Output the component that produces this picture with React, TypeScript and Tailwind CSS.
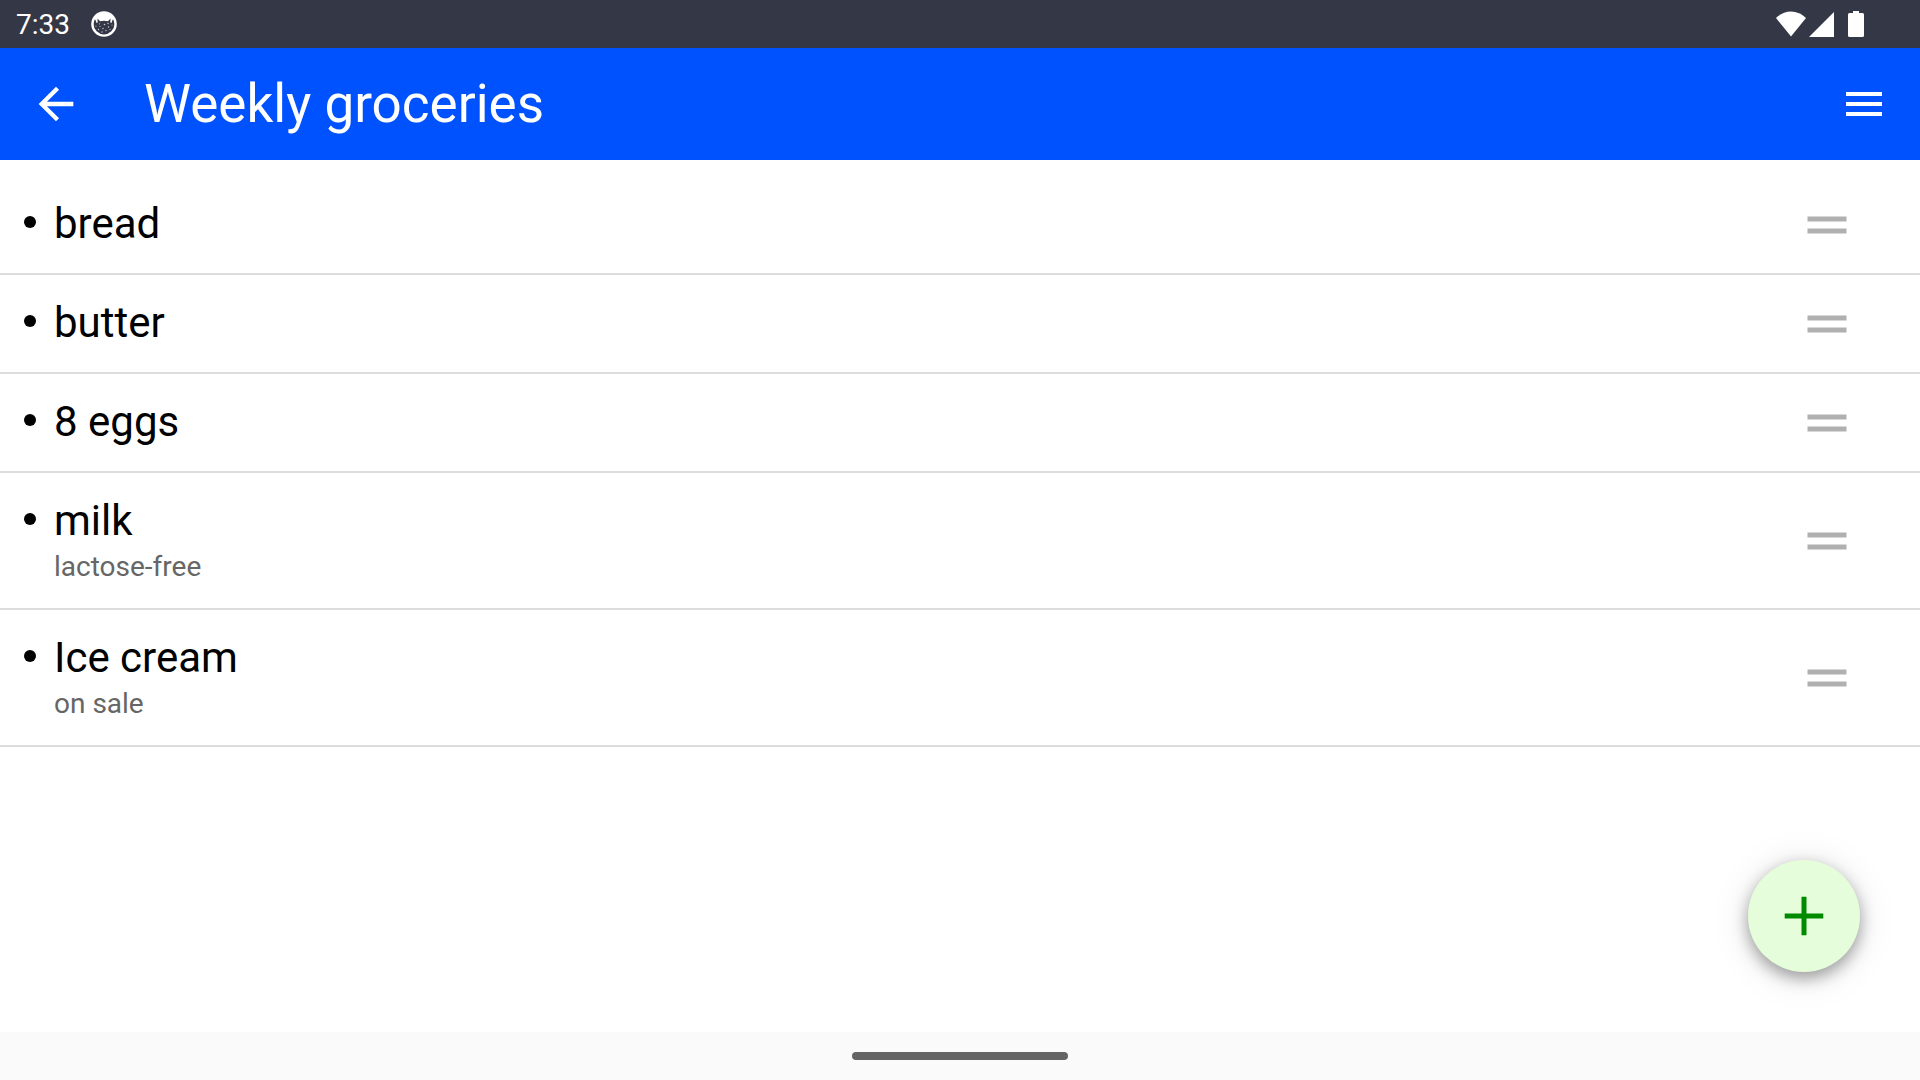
type Item = { name: string; note?: string };

const items: Item[] = [
  { name: "bread" },
  { name: "butter" },
  { name: "8 eggs" },
  { name: "milk", note: "lactose-free" },
  { name: "Ice cream", note: "on sale" },
];

function CatIcon() {
  return (
    <svg width="26" height="26" viewBox="0 0 26 26" aria-hidden="true">
      <circle cx="13" cy="13" r="11.6" fill="none" stroke="#fff" strokeWidth="2.400" />
      <path
        d="M3 8 Q6 1.500 13 1.500 Q20 1.500 23 8 L21.500 9 L20.500 12 L19.300 11.500 L19.500 7.500 L17 10.300 Q13 9.300 9 10.300 L6.500 7.500 L6.700 11.500 L5.500 12 L4.500 9 Z"
        fill="#fff"
      />
      <g fill="#fff" fillOpacity="0.75">
        <circle cx="8.500" cy="12.800" r="0.6" />
        <circle cx="17" cy="12.500" r="0.7" />
        <circle cx="21" cy="14" r="0.5" />
        <circle cx="5" cy="15" r="0.6" />
        <circle cx="9" cy="15.500" r="0.6" />
        <circle cx="13.500" cy="13.500" r="0.8" />
        <circle cx="17.500" cy="16" r="0.7" />
        <circle cx="12" cy="17.500" r="0.7" />
        <circle cx="7.500" cy="18.500" r="0.7" />
        <circle cx="15" cy="19.500" r="0.7" />
        <circle cx="19" cy="18.500" r="0.6" />
        <circle cx="11" cy="21" r="0.7" />
      </g>
    </svg>
  );
}

function StatusBar() {
  return (
    <div className="flex h-12 items-center bg-[#343746] pl-4 text-white">
      <time className="pt-0.5 text-[28px] leading-8">7:33</time>
      <div className="ml-[21px]">
        <CatIcon />
      </div>
      <div className="mr-14 ml-auto flex items-center">
        <svg width="30" height="26" viewBox="0 0 30 26" fill="#fff" aria-hidden="true">
          <path d="M15 25.500 L0 7 Q6.500 0.500 15 0.500 Q23.500 0.500 30 7 Z" />
        </svg>
        <svg className="ml-[3px]" width="25" height="26" viewBox="0 0 25 26" fill="#fff" aria-hidden="true">
          <path d="M25 1 V26 H0 Z" />
        </svg>
        <svg className="ml-[14px]" width="16" height="26" viewBox="0 0 16 26" fill="#fff" aria-hidden="true">
          <path d="M5 0 H11 V2 H14.500 Q16 2 16 3.500 V24.500 Q16 26 14.500 26 H1.500 Q0 26 0 24.500 V3.500 Q0 2 1.500 2 H5 Z" />
        </svg>
      </div>
    </div>
  );
}

function AppBar() {
  return (
    <header className="flex h-28 items-center bg-[#0052ff] px-7 text-white">
      <button type="button" aria-label="Back" className="flex size-14 items-center justify-center">
        <svg width="52" height="52" viewBox="0 0 24 24" fill="currentColor" aria-hidden="true">
          <path d="M20 11H7.830l5.590-5.590L12 4l-8 8 8 8 1.410-1.410L7.830 13H20v-2z" />
        </svg>
      </button>
      <h1 className="ml-[60px] text-[53px] leading-[60px]">Weekly groceries</h1>
      <button type="button" aria-label="Menu" className="ml-auto flex size-14 items-center justify-center">
        <svg width="36" height="24" viewBox="0 0 36 24" fill="currentColor" aria-hidden="true">
          <path d="M0 0h36v4H0zM0 10h36v4H0zM0 20h36v4H0z" />
        </svg>
      </button>
    </header>
  );
}

function ItemRow({ item }: { item: Item }) {
  return (
    <li className="flex items-center border-b-2 border-[#dcdcdc] pt-[23px] pr-[66px] pb-6 pl-6">
      <div className="flex grow gap-[18px]">
        <span className="mt-[17px] size-3 shrink-0 rounded-full bg-black" />
        <div>
          <p className="text-[42px] leading-[50px] text-black">{item.name}</p>
          {item.note && <p className="pt-1 text-[28px] leading-[34px] text-[#666]">{item.note}</p>}
        </div>
      </div>
      <button type="button" aria-label={"Reorder " + item.name} className="flex h-12 w-[54px] items-center justify-center pt-0.5">
        <svg width="40" height="18" viewBox="0 0 40 18" fill="#b0b0b0" aria-hidden="true">
          <path d="M0.500 0.400h39v5.200H0.500zM0.500 12.400h39v5.200H0.500z" />
        </svg>
      </button>
    </li>
  );
}

export default function App() {
  return (
    <div className="relative flex min-h-screen flex-col bg-white font-['Roboto',sans-serif]">
      <StatusBar />
      <AppBar />
      <main className="grow pt-4">
        <ul>
          {items.map((item) => (
            <ItemRow key={item.name} item={item} />
          ))}
        </ul>
      </main>
      <button
        type="button"
        aria-label="Add item"
        className="absolute right-[60px] bottom-[108px] flex size-28 items-center justify-center rounded-full bg-[#e6fddc] shadow-[0_6px_16px_rgba(0,0,0,0.36),0_4px_40px_rgba(0,0,0,0.10)]"
      >
        <svg width="40" height="40" viewBox="0 0 40 40" fill="#008a00" aria-hidden="true">
          <path d="M17.500 0.700h5v16.800h16.800v5h-16.800v16.800h-5v-16.800h-16.800v-5h16.800z" />
        </svg>
      </button>
      <footer className="flex h-12 items-center justify-center bg-[#fafafa]">
        <div className="h-2 w-[216px] rounded-full bg-[#646464]" />
      </footer>
    </div>
  );
}
